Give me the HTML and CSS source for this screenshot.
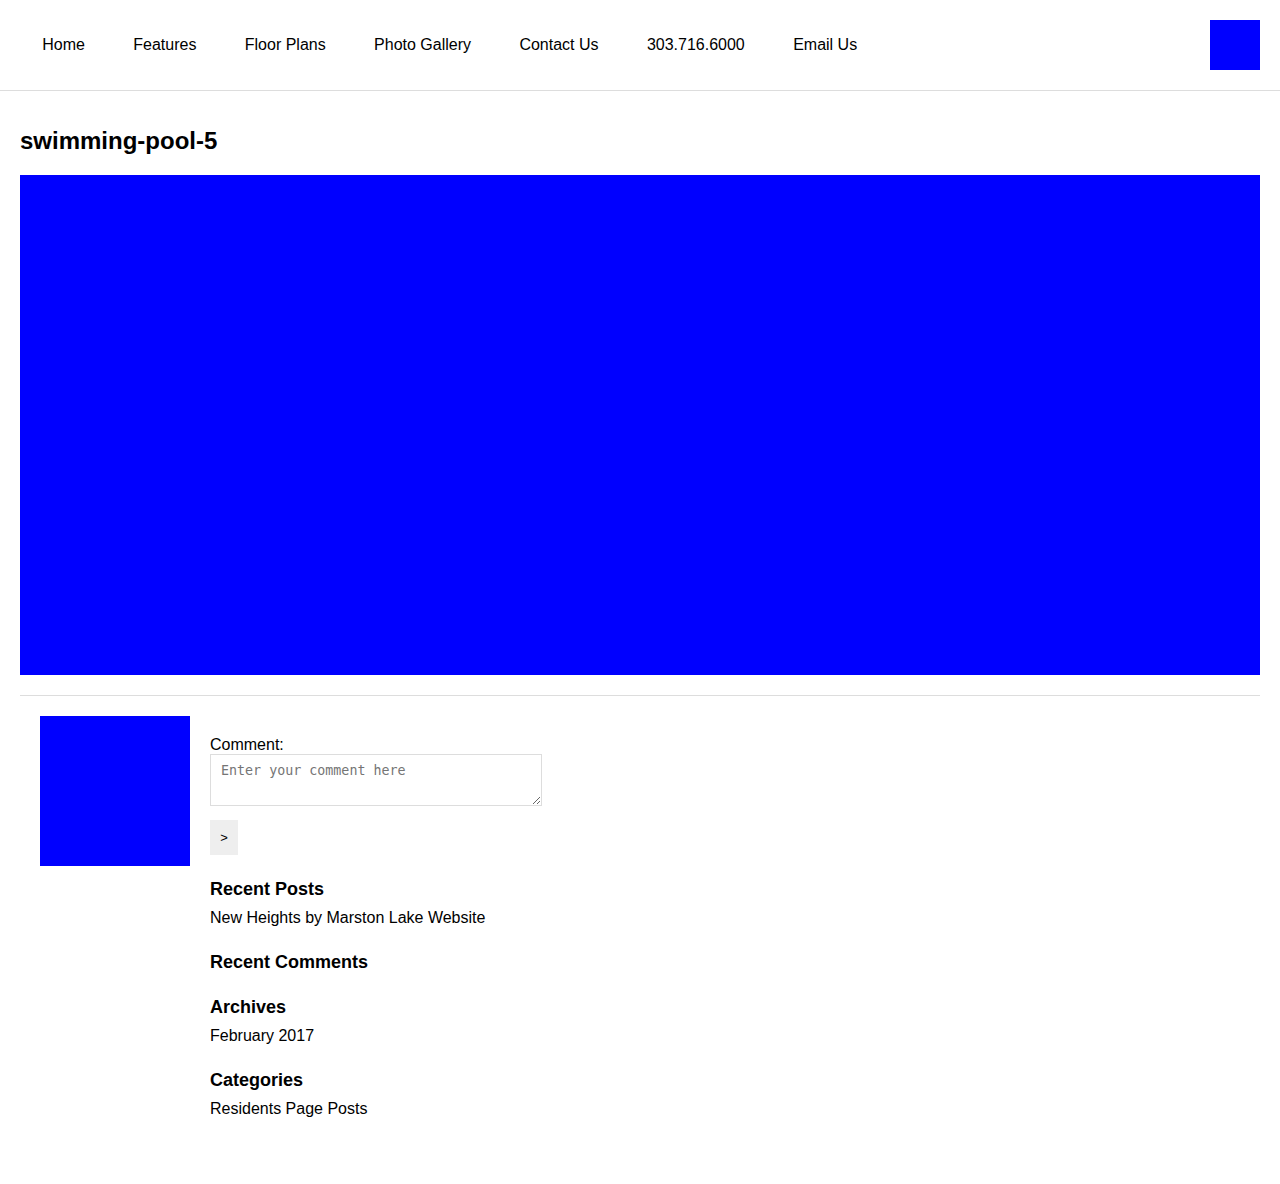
FILE: index.html
```html
<!DOCTYPE html>
<html lang="en">
<head>
<meta charset="utf-8">
<title>swimming-pool-5</title>
<link rel="stylesheet" href="styles.css">
</head>
<body>
<header class="site-header">
  <nav class="main-nav">
    <a href="#">Home</a>
    <a href="#">Features</a>
    <a href="#">Floor Plans</a>
    <a href="#">Photo Gallery</a>
    <a href="#">Contact Us</a>
    <a href="#">303.716.6000</a>
    <a href="#">Email Us</a>
  </nav>
  <div class="logo"></div>
</header>
<main class="content">
  <h1 class="title">swimming-pool-5</h1>
  <div class="hero"></div>
  <hr class="divider">
  <section class="comments">
    <div class="avatar"></div>
    <div class="side">
      <form class="comment-form">
        <label class="comment-label" for="c">Comment:</label>
        <textarea id="c" class="comment-box" placeholder="Enter your comment here"></textarea>
        <button class="send" type="button">&gt;</button>
      </form>
      <div class="widgets">
        <div class="widget">
          <h3>Recent Posts</h3>
          <ul><li>New Heights by Marston Lake Website</li></ul>
        </div>
        <div class="widget widget-empty">
          <h3>Recent Comments</h3>
        </div>
        <div class="widget">
          <h3>Archives</h3>
          <ul><li>February 2017</li></ul>
        </div>
        <div class="widget">
          <h3>Categories</h3>
          <ul><li>Residents Page Posts</li></ul>
        </div>
      </div>
    </div>
  </section>
</main>
</body>
</html>
```
FILE: styles.css
```css
* { box-sizing: border-box; }
body {
  margin: 0;
  font-family: "Liberation Sans", Arial, sans-serif;
  color: #000;
  background: #fff;
}
.site-header {
  height: 91px;
  display: flex;
  align-items: center;
  justify-content: space-between;
  padding: 0 20px 0 18px;
  border-bottom: 1px solid #ddd;
}
.main-nav { display: flex; }
.main-nav a {
  color: #000;
  text-decoration: none;
  font-size: 16px;
  padding: 0 24.2px;
  line-height: 20px;
}
.logo { width: 50px; height: 50px; background: #00f; }
.content { padding: 36px 20px 40px; }
.title {
  margin: 0 0 20px;
  font-size: 24px;
  line-height: 28px;
  font-weight: bold;
}
.hero { height: 500px; background: #00f; }
.divider {
  margin: 20px 0;
  border: 0;
  border-top: 1px solid #ddd;
  height: 0;
}
.comments {
  display: flex;
  gap: 20px;
  padding-left: 20px;
}
.avatar { width: 150px; height: 150px; background: #00f; flex: none; }
.comment-form { padding-top: 19px; }
.comment-label {
  display: block;
  font-size: 16px;
  line-height: 19px;
}
.comment-box {
  display: block;
  width: 332px;
  height: 52px;
  margin: 0;
  padding: 8px 10px;
  border: 1px solid #ddd;
  font-family: "DejaVu Sans Mono", monospace;
  font-size: 13.33px;
}
.comment-box::placeholder { color: #757575; }
.send {
  display: block;
  margin-top: 14px;
  width: 28px;
  height: 35px;
  padding: 0;
  border: 0;
  background: #eee;
  font-family: "Liberation Sans", Arial, sans-serif;
  font-size: 13px;
  color: #000;
}
.widgets {
  margin-top: 22.5px;
  display: flex;
  flex-direction: column;
  gap: 20.5px;
}
.widget-empty { padding-bottom: 2.5px; }
.widget h3 {
  margin: 0;
  font-size: 18px;
  line-height: 22px;
  font-weight: bold;
}
.widget ul { list-style: none; margin: 6.5px 0 0; padding: 0; }
.widget li { font-size: 16px; line-height: 24px; }
```
